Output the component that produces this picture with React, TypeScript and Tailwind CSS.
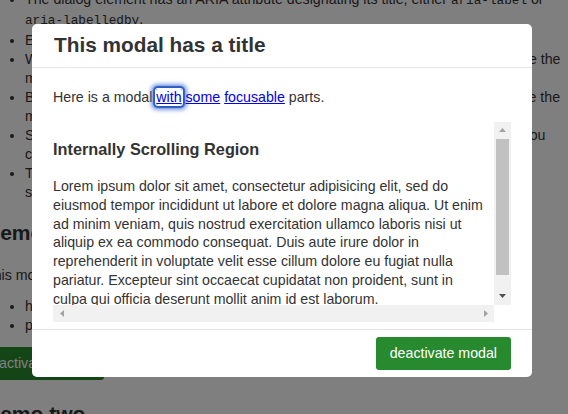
import type { ReactNode } from "react";

function Code({ children }: { children: ReactNode }) {
    return <code className="font-['Liberation_Mono',monospace] text-[12.7px]">{children}</code>;
}

function Arrow({ dir, color }: { dir: "up" | "down" | "left" | "right"; color: string }) {
    const vertical = dir === "up" || dir === "down";
    const d = {
        up: "M3.5 0L7 4H0z",
        down: "M0 0H7L3.5 4z",
        left: "M4 0V7L0 3.5z",
        right: "M0 0L4 3.5L0 7z",
    }[dir];
    return (
        <svg width={vertical ? 7 : 4} height={vertical ? 4 : 7} viewBox={vertical ? "0 0 7 4" : "0 0 4 7"}>
            <path d={d} fill={color} />
        </svg>
    );
}

function ScrollRegion() {
    return (
        <div className="grid h-[200px] grid-cols-[1fr_17px] grid-rows-[1fr_17px]">
            <div className="overflow-hidden pr-[5px]">
                <h3 className="mt-[18px] text-[16.3px] leading-[19px] font-bold">Internally Scrolling Region</h3>
                <p className="mt-[18px] leading-[18.8px]">
                    Lorem ipsum dolor sit amet, consectetur adipisicing elit, sed do eiusmod tempor incididunt ut labore et dolore
                    magna aliqua. Ut enim ad minim veniam, quis nostrud exercitation ullamco laboris nisi ut aliquip ex ea commodo
                    consequat. Duis aute irure dolor in reprehenderit in voluptate velit esse cillum dolore eu fugiat nulla
                    pariatur. Excepteur sint occaecat cupidatat non proident, sunt in culpa qui officia deserunt mollit anim id est
                    laborum.
                </p>
            </div>

            <div className="flex flex-col bg-[#f1f1f1]">
                <div className="flex h-[17px] items-center justify-center">
                    <Arrow dir="up" color="#a3a3a3" />
                </div>
                <div className="flex-1 px-[2px]">
                    <div className="h-[136px] bg-[#c1c1c1]" />
                </div>
                <div className="flex h-[17px] items-center justify-center">
                    <Arrow dir="down" color="#505050" />
                </div>
            </div>

            <div className="flex bg-[#f1f1f1]">
                <div className="flex w-[17px] items-center justify-center">
                    <Arrow dir="left" color="#a3a3a3" />
                </div>
                <div className="flex-1" />
                <div className="flex w-[17px] items-center justify-center">
                    <Arrow dir="right" color="#a3a3a3" />
                </div>
            </div>
            <div className="bg-white" />
        </div>
    );
}

export default function App() {
    return (
        <div className="relative h-[414px] w-[568px] overflow-hidden bg-white font-['Liberation_Sans',Arial,sans-serif] text-[14.2px] leading-[18.9px] text-[#333]">
            {/* page underneath, scrolled a little */}
            <div className="-mt-[10.5px] -ml-[15px] whitespace-nowrap">
                <ul className="list-disc pl-10">
                    <li>
                        The dialog element has an ARIA attribute designating its title, either <Code>aria-label</Code> or
                        <br />
                        <Code>aria-labelledby</Code>.
                    </li>
                    <li>Escape will close the modal.</li>
                    <li>
                        When the modal closes, focus returns to the element that was focused just before the
                        <br />
                        modal activated.
                    </li>
                    <li>
                        By default, clicking on the modal's underlay (outside the dialog element) will close the
                        <br />
                        modal (this can be disabled).
                    </li>
                    <li>
                        Scrolling is frozen on the main document beneath the modal while it is open as you
                        <br />
                        can see here.
                    </li>
                    <li>
                        The modal is rendered into a portal at the end of the body, outside
                        <br />
                        stacking contexts.
                    </li>
                </ul>

                <h2 className="mt-[20px] text-[21px] leading-[24px] font-bold">Demo one</h2>
                <p className="mt-[21px]">This modal has a title and an internally scrolling region.</p>
                <ul className="mt-[12px] list-disc pl-10">
                    <li>has an initial focus on a link</li>
                    <li>puts focus back where it was on close</li>
                </ul>
                <button className="mt-[12px] h-[33px] rounded-[3px] bg-[#288a2e] px-[14px] text-white">activate modal</button>
                <h2 className="mt-[22px] text-[21px] leading-[24px] font-bold">Demo two</h2>
            </div>

            {/* underlay + dialog */}
            <div className="absolute inset-0 bg-black/50 pt-[24px] pl-[32px]">
                <div className="flex w-[500px] flex-col rounded-[5px] bg-white">
                    <div className="flex h-[44px] items-center border-b border-[#e5e5e5] px-[22px]">
                        <h1 className="text-[20.8px] leading-none font-bold">This modal has a title</h1>
                    </div>

                    <div className="px-[21px] pt-[20px] pb-[7px]">
                        <p className="mb-[15px]">
                            Here is a modal{" "}
                            <a
                                href="#"
                                className="rounded-[2px] text-[#0000ee] underline shadow-[0_0_0_1px_#ffffff,0_0_1px_3px_#2a5cc8,0_0_4px_5px_rgba(42,92,200,0.6)]"
                            >
                                with
                            </a>{" "}
                            <a href="#" className="text-[#0000ee] underline">
                                some
                            </a>{" "}
                            <a href="#" className="text-[#0000ee] underline">
                                focusable
                            </a>{" "}
                            parts.
                        </p>
                        <ScrollRegion />
                    </div>

                    <div className="flex justify-end border-t border-[#e5e5e5] px-[21px] py-[7px]">
                        <button className="h-[33px] rounded-[3px] bg-[#288a2e] px-[14px] text-white">deactivate modal</button>
                    </div>
                </div>
            </div>
        </div>
    );
}
